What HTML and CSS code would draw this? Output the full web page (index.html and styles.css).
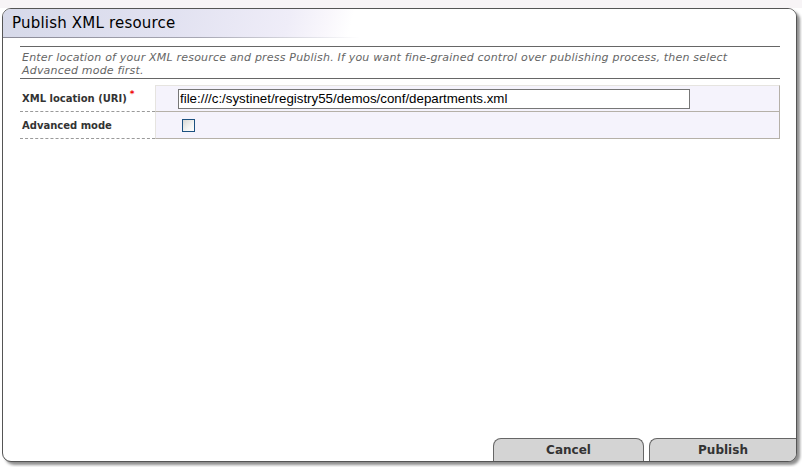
FILE: index.html
```html
<!DOCTYPE html>
<html>
<head>
<meta charset="utf-8">
<link rel="stylesheet" href="styles.css">
</head>
<body>
<div class="strip"></div>
<div class="panel">
  <div class="header"><span class="title">Publish XML resource</span></div>
  <div class="header-line"></div>
  <div class="content">
    <div class="desc">Enter location of your XML resource and press Publish. If you want fine-grained control over publishing process, then select Advanced mode first.</div>
    <div class="form">
      <div class="row first">
        <div class="label">XML location (URI) <span class="req">*</span></div>
        <div class="value"><input class="uri" type="text" value="file:///c:/systinet/registry55/demos/conf/departments.xml"></div>
      </div>
      <div class="row">
        <div class="label">Advanced mode</div>
        <div class="value"><span class="check"></span></div>
      </div>
    </div>
  </div>
  <div class="footer">
    <div class="btn cancel">Cancel</div>
    <div class="btn publish">Publish</div>
  </div>
</div>
</body>
</html>
```

FILE: styles.css
```css
html, body {
  margin: 0;
  padding: 0;
  background: #ffffff;
}
body {
  width: 802px;
  height: 467px;
  overflow: hidden;
  font-family: "DejaVu Sans", Verdana, sans-serif;
}
.strip {
  height: 8px;
  background: #f7f4f6;
}
.panel {
  margin-left: 2px;
  width: 793px;
  height: 452px;
  border: 1px solid #555555;
  border-radius: 9px;
  box-shadow: 3px 3px 3px rgba(0, 0, 0, 0.45);
  overflow: hidden;
  display: flex;
  flex-direction: column;
  background: #ffffff;
}
.header {
  height: 28px;
  display: flex;
  align-items: center;
  padding-left: 9px;
  background: linear-gradient(105deg, #d6d9e9 0%, #e2e2f1 22%, #efedf8 36%, #f9f7fc 41%, #ffffff 44%);
}
.title {
  font-size: 15px;
  color: #000000;
  letter-spacing: 0.2px;
}
.header-line {
  height: 1px;
  background: linear-gradient(90deg, #8a8a96 0%, #a8a8b4 25%, #e6e6ec 40%, #ffffff 45%);
}
.content {
  flex: 1;
  padding: 8px 16px 0 17px;
}
.desc {
  border-top: 1px solid #666666;
  border-bottom: 1px solid #666666;
  padding: 4px 2px 1px 2px;
  font-size: 11px;
  line-height: 13px;
  font-style: italic;
  color: #666666;
  letter-spacing: 0.2px;
}
.form {
  margin-top: 6px;
}
.row {
  display: flex;
  height: 27px;
}
.label {
  width: 135px;
  padding-left: 2px;
  padding-top: 1px;
  border-bottom: 1px dashed #9a9a9a;
  font-size: 10px;
  font-weight: bold;
  color: #333333;
  display: flex;
  align-items: center;
  box-sizing: border-box;
  height: 27px;
}
.req {
  color: #ee0000;
  font-size: 9px;
  position: relative;
  top: -5px;
  margin-left: 3px;
}
.value {
  flex: 1;
  background: #f5f3fc;
  border-left: 1px solid #e6e4e0;
  border-right: 1px solid #b5b0a8;
  border-bottom: 1px solid #b5b0a8;
  box-sizing: border-box;
  height: 27px;
  display: flex;
  align-items: center;
  padding-left: 22px;
}
.first .value {
  border-top: 1px solid #e6e4e0;
}
.uri {
  width: 512px;
  height: 20px;
  box-sizing: border-box;
  border: 1px solid #777777;
  background: #ffffff;
  font-family: "Liberation Sans", Arial, sans-serif;
  font-size: 13.3px;
  color: #000000;
  padding: 0 1px;
  margin: 0;
  outline: none;
}
.check {
  display: block;
  width: 13px;
  height: 13px;
  box-sizing: border-box;
  border: 1px solid #1c5180;
  background: linear-gradient(135deg, #d8d8d4 0%, #f4f4f2 60%, #ffffff 100%);
  margin-left: 4px;
  margin-top: 1px;
}
.footer {
  display: flex;
  justify-content: flex-end;
  gap: 5px;
  height: 23px;
}
.btn {
  height: 23px;
  box-sizing: border-box;
  background: #d4d4d4;
  border-top: 1px solid #666666;
  border-left: 1px solid #666666;
  font-size: 12px;
  font-weight: bold;
  color: #333333;
  display: flex;
  align-items: center;
  justify-content: center;
}
.cancel {
  width: 151px;
  border-right: 1px solid #666666;
  border-radius: 8px 8px 0 0;
}
.publish {
  width: 147px;
  border-radius: 8px 0 0 0;
}
```
